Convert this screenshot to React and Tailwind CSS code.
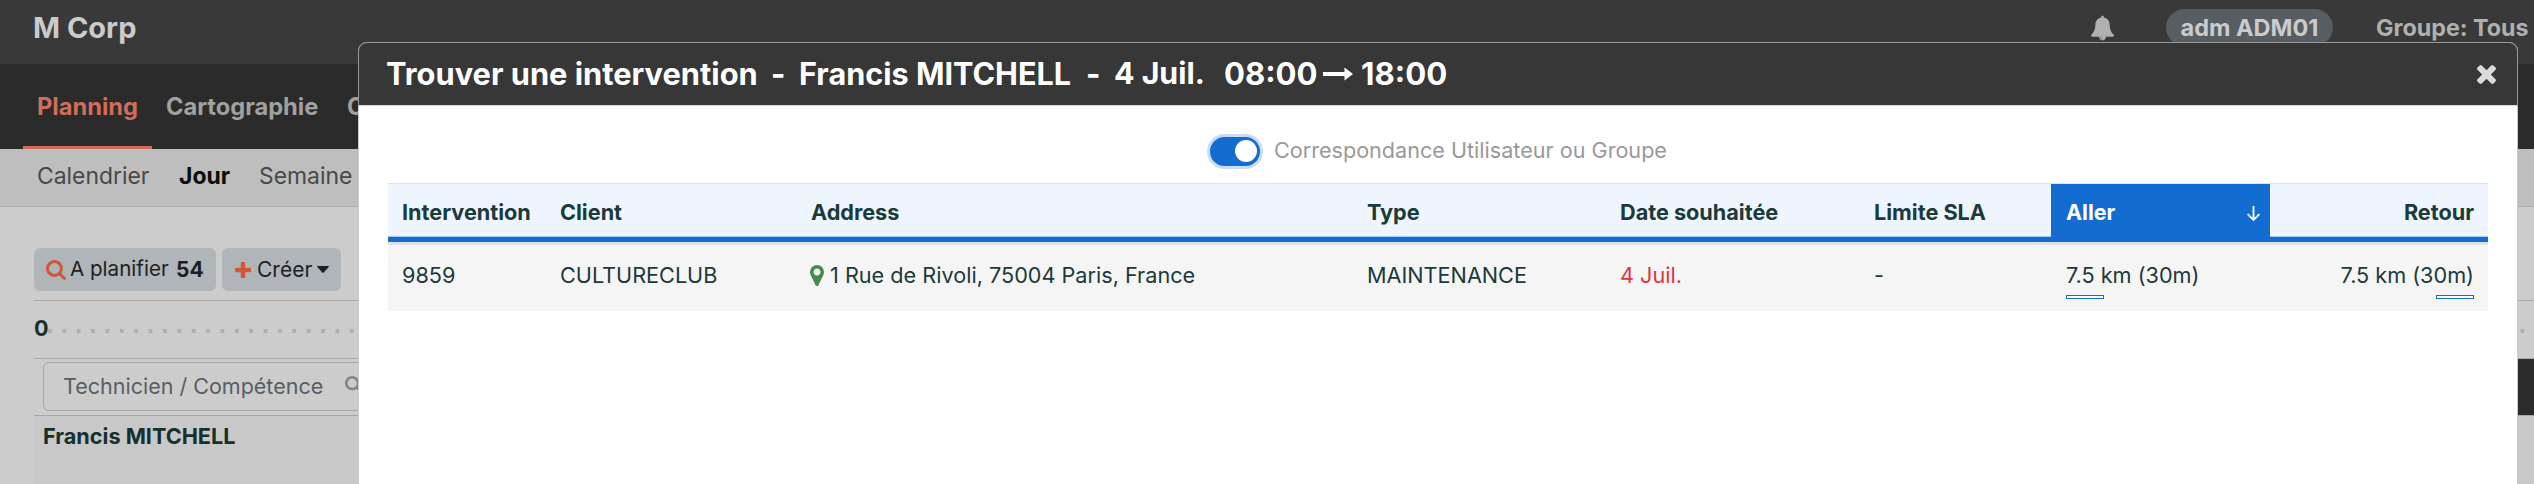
const paths = {
  bell: "M912 1696q0-16-16-16-59 0-101.5-42.5t-42.5-101.5q0-16-16-16t-16 16q0 73 51.5 124.5t124.5 51.5q16 0 16-16zm816-288q0 52-38 90t-90 38h-448q0 106-75 181t-181 75-181-75-75-181h-448q-52 0-90-38t-38-90q50-42 91-88t85-119.5 74.5-158.5 50-206 19.5-260q0-152 117-282.5t307-158.5q-8-19-8-39 0-40 28-68t68-28 68 28 28 68q0 20-8 39 190 28 307 158.5t117 282.5q0 139 19.5 260t50 206 74.5 158.5 85 119.5 91 88z",
  search: "M1216 832q0-185-131.5-316.5t-316.5-131.5-316.5 131.5-131.5 316.5 131.5 316.5 316.5 131.5 316.5-131.5 131.5-316.5zm512 832q0 52-38 90t-90 38q-54 0-90-38l-343-342q-179 124-399 124-143 0-273.5-55.5t-225-150-150-225-55.5-273.5 55.5-273.5 150-225 225-150 273.5-55.5 273.5 55.5 225 150 150 225 55.5 273.5q0 220-124 399l343 343q37 37 37 90z",
  plus: "M1600 736v192q0 40-28 68t-68 28h-416v416q0 40-28 68t-68 28h-192q-40 0-68-28t-28-68v-416h-416q-40 0-68-28t-28-68v-192q0-40 28-68t68-28h416v-416q0-40 28-68t68-28h192q40 0 68 28t28 68v416h416q40 0 68 28t28 68z",
  close: "M1490 1322q0 40-28 68l-136 136q-28 28-68 28t-68-28l-294-294-294 294q-28 28-68 28t-68-28l-136-136q-28-28-28-68t28-68l294-294-294-294q-28-28-28-68t28-68l136-136q28-28 68-28t68 28l294 294 294-294q28-28 68-28t68 28l136 136q28 28 28 68t-28 68l-294 294 294 294q28 28 28 68z",
  marker: "M1152 640q0-106-75-181t-181-75-181 75-75 181 75 181 181 75 181-75 75-181zm256 0q0 109-33 179l-364 774q-16 33-47.5 52t-67.5 19-67.5-19-46.5-52l-365-774q-33-70-33-179 0-212 150-362t362-150 362 150 150 362z",
};

function Glyph({ name, box, className }) {
  return (
    <svg viewBox={box} className={`block shrink-0 fill-current ${className}`} aria-hidden="true">
      <path d={paths[name]} />
    </svg>
  );
}

function TopBar() {
  return (
    <header className="flex h-16 items-start justify-between bg-[#393939] font-bold">
      <div className="pl-[33px] text-[29px] leading-[55px] text-[#cbcbcb]">M Corp</div>
      <div className="flex items-start text-[23.5px] text-[#b0b0b0]">
        <Glyph name="bell" box="64 0 1664 1792" className="mt-[15px] mr-[52px] h-[26px] w-[23px]" />
        <span className="mt-[9px] mr-[43px] h-[37px] w-[167px] rounded-full bg-[#565e64] text-center leading-[37px] text-[#cbcbcb]">
          adm ADM01
        </span>
        <span className="w-[158px] text-[23.3px] leading-[55px] whitespace-nowrap">Groupe: Tous</span>
      </div>
    </header>
  );
}

function MainNav() {
  return (
    <nav className="flex h-[85px] bg-[#2b2b2b] pl-[23px] text-[23.65px] leading-[85px] font-bold text-[#a1a1a1]">
      <span className="h-full w-[129px] border-b-[3px] border-[#cf6e5b] pl-[14px] text-[#cf6e5b]">Planning</span>
      <span className="w-[181px] pl-[14px]">Cartographie</span>
      <span className="pl-[14px]">C</span>
    </nav>
  );
}

function SubNav() {
  return (
    <nav className="flex h-[58px] border-b border-[#acacac] bg-[#bebebe] pl-[37px] text-[22.9px] leading-[55px] text-[#484848]">
      <span className="w-[142px]">Calendrier</span>
      <span className="w-[80px] font-bold text-[#0c0c0c]">Jour</span>
      <span>Semaine</span>
    </nav>
  );
}

function Planning() {
  return (
    <main className="flex flex-col pl-[34px]">
      <div className="flex h-[94px] gap-[6px] border-b border-[#aaaaaa] pt-[41px] text-[21px] text-[#1b1f22]">
        <button className="flex h-[43px] w-[182px] items-center rounded-[6px] bg-[#b0b5b9] pl-[12px] whitespace-nowrap">
          <Glyph name="search" box="64 128 1664 1664" className="mr-[4px] h-[20px] w-[20px] text-[#d15739]" />
          <span className="w-[106px] text-left text-[20.6px]">A planifier</span>
          <b>54</b>
        </button>
        <button className="flex h-[43px] w-[119px] items-center rounded-[6px] bg-[#b0b5b9] pl-[13px]">
          <Glyph name="plus" box="192 128 1408 1408" className="mr-[6px] h-[16px] w-[16px] text-[#d15739]" />
          <span className="w-[60px] text-left">Créer</span>
          <svg viewBox="0 0 12 7" className="h-[7px] w-[12px] fill-current">
            <path d="M.8 0h10.4q1.1.2.5 1L6.7 6.5q-.7.8-1.4 0L.3 1Q-.3.2.8 0z" />
          </svg>
        </button>
      </div>
      <div className="flex h-[58px] items-center border-b border-[#aaaaaa] text-[21.6px] font-bold text-[#16302e]">
        <span className="w-[9px] pb-[2px]">0</span>
        <span className="mt-[2px] h-1 grow bg-[linear-gradient(to_right,#afafaf_4px,transparent_4px)] bg-[length:14.39px_4px] bg-[position:5px_0] bg-repeat-x" />
      </div>
      <div className="flex h-[57px] items-center justify-between border-b border-[#a6a6a6] pl-[9px]">
        <div className="mt-[-1px] flex h-[49px] w-[360px] items-center rounded-[6px] border border-[#a5a8ab] pl-[19px] text-[21.5px] text-[#565e64]">
          <span className="w-[282px] whitespace-nowrap">Technicien / Compétence</span>
          <Glyph name="search" box="64 128 1664 1664" className="mt-[-4px] h-[17px] w-[17px] text-[#858585]" />
        </div>
        <div className="h-full w-20 bg-[#2b2b2b]" />
      </div>
      <div className="h-[68px] bg-[#c8c8c8] pl-[9px] text-[21.65px] leading-[40px] font-bold text-[#16302e]">Francis MITCHELL</div>
    </main>
  );
}

function DistanceBar() {
  return <span className="mt-[4px] block h-1 w-[38px] border border-[#136ccf] bg-white" />;
}

const grid = "grid grid-cols-[157px_251px_556px_253px_254px_192px_219px_218px]";

function Results() {
  return (
    <section className="mx-[29px] text-[21.65px] whitespace-nowrap text-[#1b3a3a]">
      <div className={`${grid} h-[54px] border-t border-b border-t-[#dee2e6] border-b-[#a6c8ec] bg-[#eef5fe] leading-[57px] font-bold`}>
        <span className="pl-[14px]">Intervention</span>
        <span className="pl-[15px]">Client</span>
        <span className="pl-[15px]">Address</span>
        <span className="pl-[15px]">Type</span>
        <span className="pl-[15px]">Date souhaitée</span>
        <span className="pl-[15px]">Limite SLA</span>
        <span className="flex h-[53px] justify-between bg-[#136ccf] pr-[10px] pl-[15px] text-white">
          <span className="text-[21.5px]">Aller</span>
          <svg viewBox="0 0 13 15" className="mt-[22px] h-[15px] w-[13px] fill-none stroke-current stroke-[1.8]">
            <path d="M6.5 0v14M.6 8.2l5.9 5.8 5.9-5.8" />
          </svg>
        </span>
        <span className="pr-[14px] text-right">Retour</span>
      </div>
      <div className="h-[5px] bg-[#136ccf]" />
      <div className="h-[3px] bg-[#dee2e6]" />
      <div className={`${grid} h-[66px] bg-[#f5f5f5] pt-[14px] leading-8`}>
        <span className="pl-[14px]">9859</span>
        <span className="pl-[15px]">CULTURECLUB</span>
        <span className="flex pl-[14px]">
          <Glyph name="marker" box="384 128 1024 1536" className="mt-[6px] mr-[6px] h-[21px] w-[14px] text-[#468c49]" />
          1 Rue de Rivoli, 75004 Paris, France
        </span>
        <span className="pl-[15px]">MAINTENANCE</span>
        <span className="pl-[15px] text-[#dc3545]">4 Juil.</span>
        <span className="pl-[15px]">-</span>
        <div className="pl-[15px]">
          7.5 km (30m)
          <DistanceBar />
        </div>
        <div className="flex flex-col items-end pr-[14px]">
          7.5 km (30m)
          <DistanceBar />
        </div>
      </div>
    </section>
  );
}

function Modal() {
  return (
    <div className="absolute top-[42px] left-[358px] h-[500px] w-[2160px] rounded-[9px] border border-[#cccccc] bg-white">
      <div className="-mx-px -mt-px flex h-[64px] items-center rounded-t-[9px] border border-[#999999] border-b-[#d9d9d9] bg-[#373737] pr-[21px] pl-[27px] text-[30.8px] font-bold whitespace-nowrap text-white">
        <span className="w-[385px]">Trouver une intervention</span>
        <span className="w-[28px]">-</span>
        <span className="w-[287px] text-[30.6px]">Francis MITCHELL</span>
        <span className="w-[28px]">-</span>
        <span className="w-[110px] text-[30.3px]">4 Juil.</span>
        <span className="w-[99px] text-[31.1px]">08:00</span>
        <svg viewBox="0 0 30 14" className="mr-[8px] h-[14px] w-[30px] fill-current">
          <path d="M0 5h21.5V.5L30 7l-8.5 6.5V9H0z" />
        </svg>
        <span className="text-[31.2px]">18:00</span>
        <Glyph name="close" box="302 366 1188 1188" className="ml-auto h-[19px] w-[19px] text-[#dadada]" />
      </div>
      <div className="flex h-[77px] items-center pt-[13px] pl-[851px]">
        <div className="mr-[14px] flex h-[29px] w-[50px] items-center justify-end rounded-full bg-[#136ccf] pr-[3px] ring-3 ring-[#c9dcf3]">
          <div className="h-[22px] w-[22px] rounded-full bg-white" />
        </div>
        <span className="text-[21.6px] leading-none text-[#999999]">Correspondance Utilisateur ou Groupe</span>
      </div>
      <Results />
    </div>
  );
}

export default function App() {
  return (
    <div className="relative h-[484px] w-full overflow-hidden bg-[#cccccc] font-['Inter',sans-serif]">
      <TopBar />
      <MainNav />
      <SubNav />
      <Planning />
      <Modal />
    </div>
  );
}
